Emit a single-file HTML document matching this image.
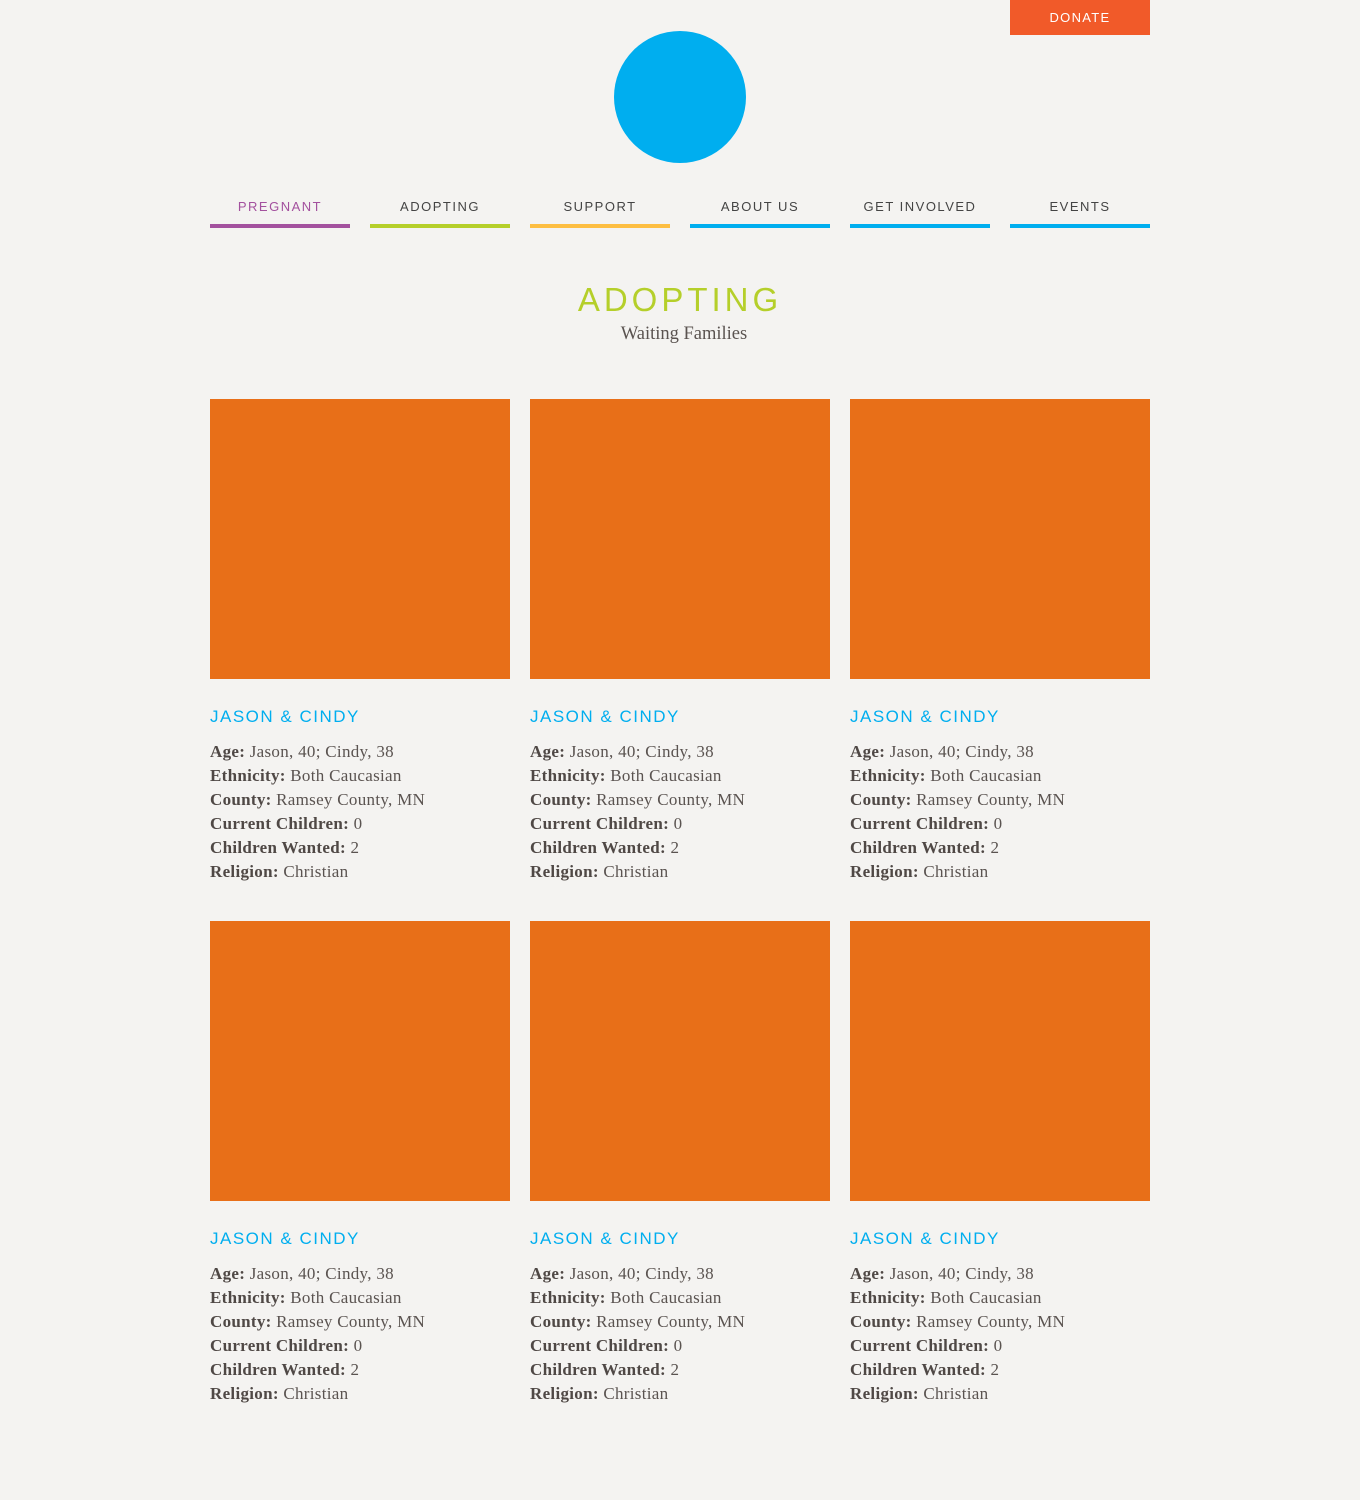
<!DOCTYPE html>
<html><head><style>
body{margin:0;background:#f4f3f1;width:1360px;height:1500px;position:relative;font-family:"Liberation Sans",sans-serif;color:#5a5350}
.donate{position:absolute;left:1010px;top:0;width:140px;height:35px;background:#f15a29;color:#fff;font-size:13px;letter-spacing:1.3px;text-align:center;line-height:35px}
.logo{position:absolute;left:614px;top:31px;width:132px;height:132px;border-radius:50%;background:#00aeef}
.nav{position:absolute;top:199px;width:140px;height:29px;box-sizing:border-box;border-bottom:4px solid;text-align:center;font-size:13px;letter-spacing:1.5px;color:#444}
h1{position:absolute;top:281px;left:0;width:1360px;margin:0;text-align:center;font-weight:normal;font-size:33px;letter-spacing:4px;color:#b5cf2a;line-height:38px}
.sub{position:absolute;top:324px;left:4px;width:1360px;text-align:center;font-family:"Liberation Serif",serif;font-size:18.5px;color:#5a5350}
.card{position:absolute;width:300px}
.img{width:300px;height:280px;background:#e86f18}
.name{margin-top:27px;font-size:17px;letter-spacing:1.5px;color:#00aeef;line-height:22px}
.info{margin-top:12px;font-family:"Liberation Serif",serif;font-size:17px;letter-spacing:0.3px;line-height:24px;color:#5a5350}
.info b{color:#4f4845}
</style></head><body>
<div class="donate">DONATE</div>
<div class="logo"></div>
<div class="nav" style="left:210px;border-color:#a3519e;color:#a3519e">PREGNANT</div>
<div class="nav" style="left:370px;border-color:#b5cf2a">ADOPTING</div>
<div class="nav" style="left:530px;border-color:#fdbe42">SUPPORT</div>
<div class="nav" style="left:690px;border-color:#00aeef">ABOUT US</div>
<div class="nav" style="left:850px;border-color:#00aeef">GET INVOLVED</div>
<div class="nav" style="left:1010px;border-color:#00aeef">EVENTS</div>
<h1>ADOPTING</h1>
<div class="sub">Waiting Families</div>
<div class="card" style="left:210px;top:399px"><div class="img"></div><div class="name">JASON &amp; CINDY</div><div class="info"><b>Age:</b> Jason, 40; Cindy, 38<br><b>Ethnicity:</b> Both Caucasian<br><b>County:</b> Ramsey County, MN<br><b>Current Children:</b> 0<br><b>Children Wanted:</b> 2<br><b>Religion:</b> Christian</div></div>
<div class="card" style="left:530px;top:399px"><div class="img"></div><div class="name">JASON &amp; CINDY</div><div class="info"><b>Age:</b> Jason, 40; Cindy, 38<br><b>Ethnicity:</b> Both Caucasian<br><b>County:</b> Ramsey County, MN<br><b>Current Children:</b> 0<br><b>Children Wanted:</b> 2<br><b>Religion:</b> Christian</div></div>
<div class="card" style="left:850px;top:399px"><div class="img"></div><div class="name">JASON &amp; CINDY</div><div class="info"><b>Age:</b> Jason, 40; Cindy, 38<br><b>Ethnicity:</b> Both Caucasian<br><b>County:</b> Ramsey County, MN<br><b>Current Children:</b> 0<br><b>Children Wanted:</b> 2<br><b>Religion:</b> Christian</div></div>
<div class="card" style="left:210px;top:921px"><div class="img"></div><div class="name">JASON &amp; CINDY</div><div class="info"><b>Age:</b> Jason, 40; Cindy, 38<br><b>Ethnicity:</b> Both Caucasian<br><b>County:</b> Ramsey County, MN<br><b>Current Children:</b> 0<br><b>Children Wanted:</b> 2<br><b>Religion:</b> Christian</div></div>
<div class="card" style="left:530px;top:921px"><div class="img"></div><div class="name">JASON &amp; CINDY</div><div class="info"><b>Age:</b> Jason, 40; Cindy, 38<br><b>Ethnicity:</b> Both Caucasian<br><b>County:</b> Ramsey County, MN<br><b>Current Children:</b> 0<br><b>Children Wanted:</b> 2<br><b>Religion:</b> Christian</div></div>
<div class="card" style="left:850px;top:921px"><div class="img"></div><div class="name">JASON &amp; CINDY</div><div class="info"><b>Age:</b> Jason, 40; Cindy, 38<br><b>Ethnicity:</b> Both Caucasian<br><b>County:</b> Ramsey County, MN<br><b>Current Children:</b> 0<br><b>Children Wanted:</b> 2<br><b>Religion:</b> Christian</div></div>
</body></html>
